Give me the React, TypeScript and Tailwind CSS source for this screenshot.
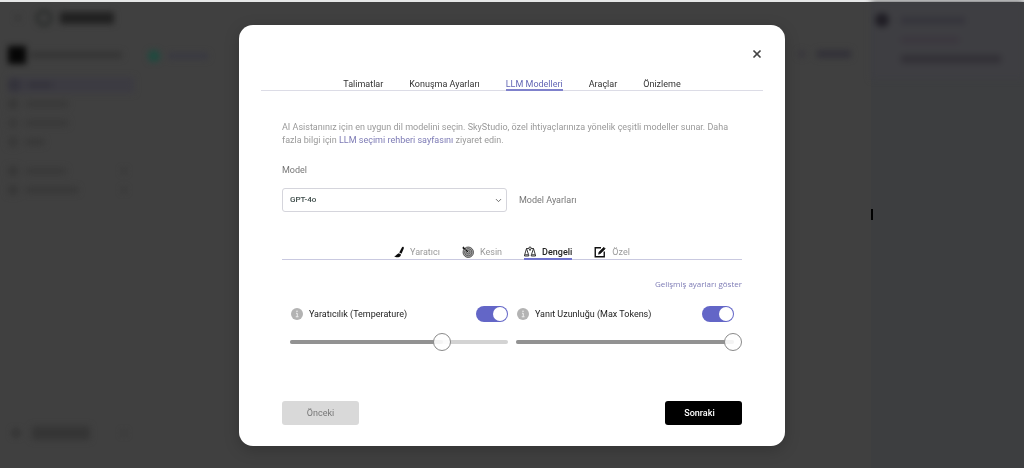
import { useState } from 'react';
import { X } from 'lucide-react';
import { FiChevronDown } from 'react-icons/fi';
import clsx from 'clsx';

const steps = ['Talimatlar', 'Konuşma Ayarları', 'LLM Modelleri', 'Araçlar', 'Önizleme'];

function BrushIcon() {
  return (
    <svg viewBox="0 0 20 24" className="h-3 w-[10px]" fill="#0a0a0a">
      <path d="M18.500 1.500c1.500.8 1.300 2.500.8 4L15 15.500l-4.500-2.500L15.500 3.500c.8-1.400 1.800-2.500 3-2z" />
      <path d="M9.500 14.500l4.500 2.500c-.3 4-3.500 5.500-7 5.500-3 0-5.500-.8-6.500-2.500 4 .5 5-4.500 9-5.500z" />
    </svg>
  );
}

function TargetIcon() {
  return (
    <svg viewBox="0 0 24 24" className="size-3" fill="none" stroke="#333" strokeWidth="1.5">
      <circle cx="12.5" cy="12.500" r="10.500" fill="#a8a8a8" />
      <circle cx="12.5" cy="12.500" r="7.200" stroke="#444" />
      <circle cx="12.5" cy="12.500" r="3.600" stroke="#444" />
      <path d="M12.500 12.500 4 4" stroke="#111" strokeWidth="2" />
      <path d="M.5 3.500 3.500.5l1.500 3 3.500 1.500L6 8 2.500 7z" fill="#111" stroke="#fff" strokeWidth="0.600" />
    </svg>
  );
}

function ScaleIcon() {
  return (
    <svg viewBox="0 0 24 24" className="size-3" fill="none" stroke="#222" strokeWidth="1.800" strokeLinejoin="round">
      <path d="M5 5h4.500M14.500 5H19M12 7v3" />
      <circle cx="12" cy="4.500" r="2.500" />
      <path d="M5 5 1.500 17M5 5l4 12M19 5l-4 12M19 5l3.500 12" />
      <path d="M1 17.500h8.500v2.500H1zM14.500 17.500H23v2.500h-8.500z" />
    </svg>
  );
}

function EditIcon() {
  return (
    <svg viewBox="0 0 24 24" className="size-3" fill="none" stroke="#111">
      <path d="M14 3.500H2.500v18h18V11" strokeWidth="2.800" />
      <path d="M9 16.500l1-4.500L19.500 2.500l3 3L13 15z" fill="#111" strokeWidth="1.200" />
    </svg>
  );
}

function InfoIcon() {
  return (
    <svg viewBox="0 0 24 24" className="size-3 shrink-0">
      <circle cx="12" cy="12" r="12" fill="#b3b3b3" />
      <path d="M10 10.500h2.500v7M9.500 17.500h5.500" stroke="#eee" strokeWidth="2" fill="none" />
      <circle cx="12" cy="6.500" r="1.600" fill="#eee" />
    </svg>
  );
}

const presets = [
  { name: 'Yaratıcı', icon: <BrushIcon /> },
  { name: 'Kesin', icon: <TargetIcon /> },
  { name: 'Dengeli', icon: <ScaleIcon /> },
  { name: 'Özel', icon: <EditIcon /> },
];

interface SettingProps {
  id: string;
  label: string;
  initial: number;
}

function Setting({ id, label, initial }: SettingProps) {
  const [value, setValue] = useState(initial);
  const [on, setOn] = useState(true);

  return (
    <div>
      <div className="flex items-center h-4 pl-px">
        <InfoIcon />
        <label htmlFor={id} className="ml-[6px] flex-1 pt-[2px] text-[#222]">{label}</label>
        <input
          type="checkbox"
          role="switch"
          aria-label={`${label} aç`}
          checked={on}
          onChange={(e) => setOn(e.target.checked)}
          className="h-4 w-8 appearance-none rounded-full bg-[#a3a3a3] p-px checked:bg-[#6366c7] before:block before:size-[14px] before:rounded-full before:bg-white checked:before:ml-4"
        />
      </div>
      <div className="relative mt-[18px] h-1 rounded-full bg-[#d3d3d3]">
        <div className="h-1 rounded-full bg-[#929292]" style={{ width: `${value}%` }} />
        <input
          id={id}
          type="range"
          value={value}
          onChange={(e) => setValue(Number(e.target.value))}
          className="absolute -inset-x-2 -top-2 h-5 w-[calc(100%+16px)] appearance-none bg-transparent [&::-webkit-slider-thumb]:size-[18px] [&::-webkit-slider-thumb]:appearance-none [&::-webkit-slider-thumb]:rounded-full [&::-webkit-slider-thumb]:border [&::-webkit-slider-thumb]:border-[#8a8a8a] [&::-webkit-slider-thumb]:bg-white/90"
        />
      </div>
    </div>
  );
}

// Dimmed page behind the dialog
function Backdrop() {
  return (
    <div aria-hidden="true" className="flex flex-1 bg-[#404040]">
      <aside className="flex w-[134px] flex-col pl-2 pb-7 blur-[3px]">
        <div className="mt-2 flex items-center gap-2 pl-2">
          <span className="size-1 bg-[#303030]" />
          <span className="ml-2 size-4 rounded-full border-2 border-[#1c201e]" />
          <span className="h-3 w-[54px] bg-[#212121]" />
        </div>
        <div className="mt-5 flex items-center gap-1">
          <span className="size-[18px] bg-[#060606]" />
          <span className="h-[6px] w-[92px] bg-[#343434]" />
        </div>
        <div className="mt-[13px] flex h-4 items-center gap-2 bg-[#3c3b42]">
          <span className="size-3 bg-[#34333b]" />
          <span className="h-[6px] w-6 bg-[#34333b]" />
        </div>
        <div className="mt-[5px] flex h-3 items-center gap-2">
          <span className="size-[10px] bg-[#383838]" />
          <span className="h-[6px] w-[42px] bg-[#383838]" />
        </div>
        <div className="mt-[7px] flex h-3 items-center gap-2">
          <span className="size-[10px] bg-[#3a3a3a]" />
          <span className="h-[6px] w-[42px] bg-[#383838]" />
        </div>
        <div className="mt-[7px] flex h-3 items-center gap-2">
          <span className="size-[10px] bg-[#393939]" />
          <span className="h-[6px] w-[18px] bg-[#373737]" />
        </div>
        <div className="mt-[17px] flex h-3 items-center gap-2 pr-2">
          <span className="size-[10px] bg-[#383838]" />
          <span className="h-[6px] w-10 bg-[#383838]" />
          <span className="ml-auto size-1 bg-[#333]" />
        </div>
        <div className="mt-[7px] flex h-3 items-center gap-2 pr-2">
          <span className="size-[10px] bg-[#383838]" />
          <span className="h-[6px] w-[52px] bg-[#373737]" />
          <span className="ml-auto size-1 bg-[#333]" />
        </div>
        <div className="mt-auto flex items-center gap-2 pr-2 pl-1">
          <span className="size-2 rounded-full bg-[#323232]" />
          <span className="ml-1 h-[14px] w-[58px] bg-[#353535]" />
          <span className="ml-auto size-1 bg-[#363636]" />
        </div>
      </aside>
      <main className="flex flex-1 items-start justify-between pr-5 pl-[14px] pt-12 blur-[3px]">
        <div className="flex items-center gap-2">
          <span className="size-3 rounded-full bg-[#1d4a3f]" />
          <span className="h-[6px] w-10 bg-[#393942]" />
        </div>
        <div className="flex items-center gap-3">
          <span className="size-[6px] bg-[#35343b]" />
          <span className="h-2 w-[34px] bg-[#323138]" />
        </div>
      </main>
      <aside className="w-[153px] bg-[#3d3e40]">
        <div className="flex gap-3 bg-[#3e3e42] pt-[11px] pb-4 pl-1 blur-[3px]">
          <span className="size-[14px] rounded-full bg-[#1f1d24]" />
          <div className="pt-1">
            <div className="h-[7px] w-16 bg-[#35343b]" />
            <div className="mt-[13px] h-[6px] w-[58px] bg-[#3b363e]" />
            <div className="mt-3 h-2 w-[100px] bg-[#323036]" />
          </div>
        </div>
        <div className="mt-[130px] h-[11px] w-[2px] bg-black" />
      </aside>
    </div>
  );
}

export default function App() {
  const [step, setStep] = useState('LLM Modelleri');
  const [preset, setPreset] = useState('Dengeli');

  return (
    <div className="flex min-h-screen flex-col border-t-2 border-[#e6e7e7] bg-[#404040] font-['Roboto',sans-serif] text-[9px] leading-[13px]">
      <Backdrop />

      <div className="fixed inset-0 top-[2px] flex items-center justify-center">
        <div role="dialog" aria-modal="true" className="w-full max-w-[546px] rounded-[14px] bg-white pb-[21px] shadow-[0_4px_16px_rgba(0,0,0,0.2)]">
          <div className="flex justify-end px-5 pt-[21px]">
            <button type="button" aria-label="Kapat" className="flex size-4 items-center justify-center text-[#444]">
              <X className="size-3" strokeWidth={3.5} />
            </button>
          </div>

          <nav className="mx-[22px] mt-[17px] flex justify-center gap-[26px] border-b border-[#dcdce6]">
            {steps.map((name) => (
              <button
                key={name}
                type="button"
                onClick={() => setStep(name)}
                className={clsx('-mb-px border-b-2 pt-px leading-[9px]', step === name ? 'border-[#7f81cc] text-[#6366b5]' : 'border-transparent text-[#333]')}
              >
                {name}
              </button>
            ))}
          </nav>

          <div className="px-[43px]">
            <p className="mt-[30px] text-[#999]">
              AI Asistanınız için en uygun dil modelini seçin. SkyStudio, özel ihtiyaçlarınıza yönelik çeşitli modeller sunar. Daha
              fazla bilgi için <a href="#rehber" className="text-[#7d7bb5]">LLM seçimi rehberi sayfasını</a> ziyaret edin.
            </p>

            <label htmlFor="model" className="mt-[17px] block text-[#777]">Model</label>
            <div className="mt-[11px] flex items-center gap-3">
              <div className="relative w-[225px]">
                <select id="model" className="block h-6 w-full appearance-none rounded-[3px] border border-[#d5d5dc] bg-white px-[7px] text-[8px] font-medium text-[#3c4a48]">
                  <option>GPT-4o</option>
                </select>
                <FiChevronDown className="pointer-events-none absolute top-2 right-1 size-[9px] text-[#444]" />
              </div>
              <span className="pt-[2px] text-[#777]">Model Ayarları</span>
            </div>

            <div className="mt-[33px] flex justify-center gap-[22px] border-b border-[#c9c9e0]">
              {presets.map(({ name, icon }) => (
                <button
                  key={name}
                  type="button"
                  onClick={() => setPreset(name)}
                  className="-mb-px flex items-center gap-[6px] pt-px"
                >
                  {icon}
                  <span className={preset === name ? 'font-medium text-[#222]' : 'text-[#999]'}>{name}</span>
                </button>
              )).map((tab, i) => (
                <div key={presets[i].name} className={clsx('-mb-px border-b-2', preset === presets[i].name ? 'border-[#7072cc]' : 'border-transparent')}>
                  {tab}
                </div>
              ))}
            </div>

            <div className="mt-[17px] flex justify-end">
              <a href="#gelismis" className="font-['Open_Sans',sans-serif] text-[8px] text-[#7d7bb5]">Gelişmiş ayarları göster</a>
            </div>

            <div className="mt-4 grid grid-cols-2 gap-2 px-2">
              <Setting id="temperature" label="Yaratıcılık (Temperature)" initial={70} />
              <Setting id="tokens" label="Yanıt Uzunluğu (Max Tokens)" initial={100} />
            </div>

            <div className="mt-[57px] flex justify-between">
              <button type="button" className="h-6 w-[77px] rounded-[3px] bg-[#d9d9d9] pt-px text-[#777]">Önceki</button>
              <button type="button" className="h-6 w-[77px] rounded-[3px] bg-black pt-px pr-2 font-medium text-white">Sonraki</button>
            </div>
          </div>
        </div>
      </div>
    </div>
  );
}
